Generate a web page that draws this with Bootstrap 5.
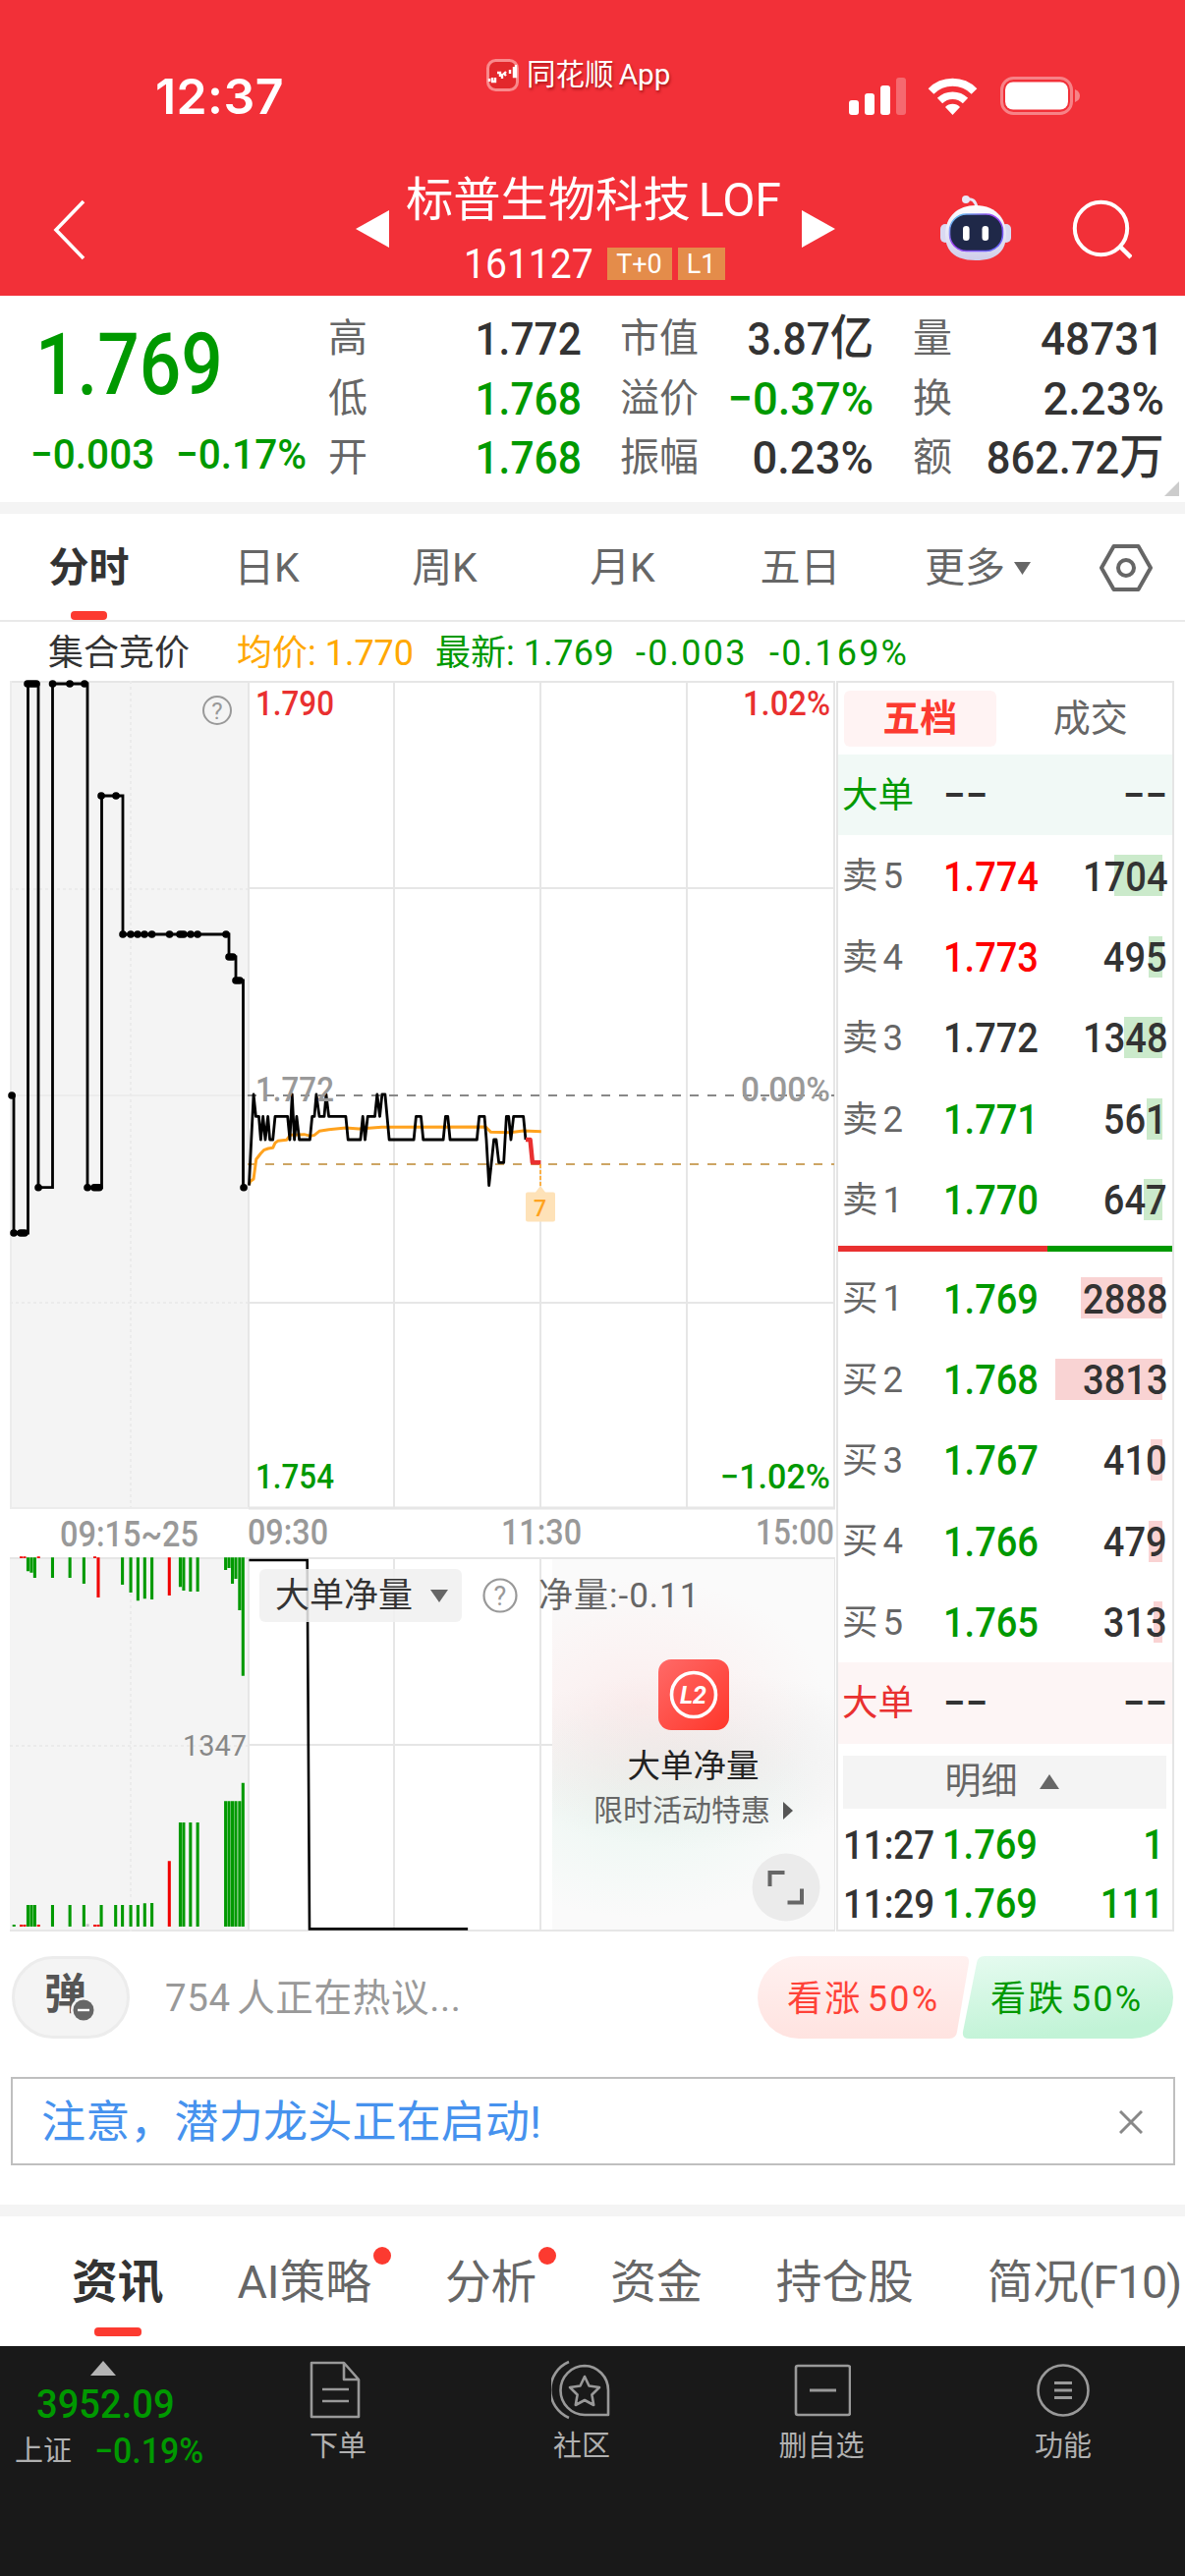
<!DOCTYPE html>
<html lang="zh-CN">
<head>
<meta charset="utf-8">
<meta name="viewport" content="width=device-width, initial-scale=1">
<title>标普生物科技LOF 161127</title>
<link href="https://cdn.jsdelivr.net/npm/bootstrap@5.3.0/dist/css/bootstrap.min.css" rel="stylesheet">
<style>
:root{--up:#e93030;--down:#009900;--ink:#333;--sub:#666;--mute:#999;--accent:#fc3a30;--band:#f4f4f4}
body{width:1206px;height:2622px;overflow:hidden;background:#fff;color:var(--ink);font-family:Roboto,"Noto Sans CJK SC",sans-serif;line-height:1}
.up{color:var(--up)}.down{color:var(--down)}.sub{color:var(--sub)}.mute{color:var(--mute)}.ink{color:var(--ink)}
svg{display:block;flex:none}
/* narrow numerals */
.din{display:inline-block;font-weight:500;white-space:nowrap;transform:scaleX(.905);transform-origin:left center}
.din-r{transform-origin:right center}
.din-w{transform:scaleX(.965)}
/* header */
.app-head{height:301px;background:#f23038;color:#fff}
.status{height:157px;padding:0 106px 0 158px}
.clock{font:600 50px/1 Inter,sans-serif;width:337px;padding-top:38px;letter-spacing:.4px}
.brand{font-size:29.500px;padding-bottom:4px;text-shadow:1px 2px 3px rgba(110,0,0,.6);word-spacing:-2px}
.status-icons{padding-top:38px}
.titlebar{height:144px}
.side-l{width:362px;padding-left:53px}
.side-r{width:356px;padding-left:106px}
.fund-name{font-size:48.3px;height:66px;line-height:68px;width:420px;padding-right:4px;word-spacing:-4px}
.code{font-size:42px;font-weight:400;transform:scaleX(.93)}
.tagbox{background:#e48c4a;font-size:27px;height:33px;line-height:34px;text-align:center}
/* quote */
.quote{height:210px}
.price-col{width:334px;padding-left:36px}
.price{font-size:87px;transform:scaleX(.86);padding-top:13px;height:114px;line-height:114px}
.delta{font-size:42px;height:68px;line-height:68px;margin:14px 0 0 -5px}
.stats{font-size:40px;padding-top:14px}
.stat{height:60.5px;line-height:60.5px}
.stat .din{font-size:47px}
.cjk-n{font-size:49px}
.c1{width:258px}.c2{width:258px;margin-left:39px}.c3{width:256px;margin-left:40px}
.corner{right:6px;bottom:6px}
.band{height:12px;background:var(--band)}
/* chart tabs */
.ktabs{height:110px;border-bottom:2px solid #e9e9e9;font-size:41px;color:var(--sub);padding-top:3px}
.ktabs>div{width:181px}
.bar-on{background:var(--accent);border-radius:4px;height:9px}
.k-bar{left:72px;bottom:0;width:37px}
.info{height:60px;font-size:36px;padding-left:49px;padding-top:4px}
/* order book */
.book{width:344px;border:2px solid #e5e5e5;height:1273px;background:#fff}
.book-tabs{height:73px;padding:8px 6px;font-size:38px}
.book-tabs>div{width:155px;height:57px;line-height:57px;text-align:center}
.book-on{background:#fff3f3;color:var(--accent);font-weight:700;border-radius:6px}
.orow{height:82.4px;padding:2px 5px 0 4px;font-size:36.5px;position:relative}
.orow .lbl{width:102.500px;word-spacing:-4px}
.orow .din{font-size:42px}
.orow .qty{position:relative}
.depth{position:absolute;right:10px;top:20px;height:42px}
.d-sell{background:#cbeacb}.d-buy{background:#f9d3d3}
.big-s{background:#f1f9f6}.big-b{background:#fdf5f5}
.bs-bar{height:6px;margin:6px 0}
.detail{height:54px;margin:12px 6px 6px 5px;padding-right:6px;background:var(--band);font-size:37px}
.trow{height:60px;padding:3px 8px 0 5px;font-size:42px}
.trow .t{font-size:40.500px;width:101px}
/* chart overlays */
.ov{position:absolute}
.indicator{left:254px;top:904px;width:206px;height:54px;border-radius:6px;background:rgba(240,240,240,.85);font-size:35px;padding-left:16px}
.net{left:481px;top:904px;height:54px;font-size:35px}
.net span{letter-spacing:1px}
.promo{left:552px;top:894px;width:287px;height:377px;background:radial-gradient(ellipse 190px 130px at 90px 150px,rgba(255,215,215,.35),transparent),radial-gradient(ellipse 190px 110px at 90px 255px,rgba(205,240,225,.3),transparent),radial-gradient(ellipse 230px 90px at 150px 205px,rgba(225,225,225,.5),transparent),#fafafa}
.promo-t{font-size:33.5px;color:#222;margin-top:20px}
.promo-s{font-size:30px;color:var(--sub);margin-top:13px}
.full{left:755px;top:1193px}
/* talk */
.talk{height:147px;padding:24px 12px 0 12px}
.dan{width:120px;height:84px;border-radius:42px;background:var(--band);border:3px solid #ececec;font-size:43px;font-weight:700;color:#555}
.notice{height:90px;margin:0 10px 0 11px;border:2px solid #bfbfbf;padding:2px 31px 0 29px;font-size:45px;letter-spacing:.2px;color:#4692ee}
/* news tabs */
.ntabs{height:132px;font-size:46.700px;color:var(--sub);gap:75px;padding-left:73px;overflow:hidden}
.ntabs>div{line-height:134px}
.ntabs .tight{letter-spacing:-.3px}
.reddot{position:absolute;width:18px;height:18px;border-radius:50%;background:var(--accent);top:31px;right:-20px}
.n-bar{left:23px;bottom:10px;width:48px}
/* bottom bar */
.dock{height:234px;background:#191919;color:#b0b0b0}
.dock-item{width:246px;font-size:29px;padding-top:13px}
.dock-item span{margin-top:13px}
</style>
</head>
<body>
<header class="app-head">
  <div class="status d-flex align-items-center">
    <div class="clock">12:37</div>
    <div class="brand d-flex align-items-center gap-2">
      <svg width="33" height="33" viewBox="0 0 33 33"><rect x="1.5" y="1.5" width="30" height="30" rx="8" fill="#e3282c" stroke="#f98a8c" stroke-width="3"/><path d="M3 20v3M6 19v4h3v-4M11 14h3v4M16 15v5M20 13l-2 2 2 2M24 11v4M28 8v10h2V6" stroke="#fff" stroke-width="2.4" fill="none"/></svg>
      <span class="text-nowrap">同花顺 App</span>
    </div>
    <div class="status-icons d-flex align-items-center ms-auto">
      <svg width="58" height="38" viewBox="0 0 58 38" fill="#fff"><rect y="23" width="10" height="15" rx="3"/><rect x="16" y="16" width="10" height="22" rx="3"/><rect x="32" y="8" width="10" height="30" rx="3"/><rect x="48" y="0" width="10" height="38" rx="3" opacity=".28"/></svg>
      <svg style="margin-left:22px" width="51" height="38" viewBox="0 0 51 38" fill="none" stroke="#fff" stroke-width="8"><path d="M3.5 14a31 31 0 0 1 44 0"/><path d="M12.5 23.5a18.500 18.500 0 0 1 26 0" stroke-width="7.500"/><path d="M25.500 38l-7.500-8a10.500 10.500 0 0 1 15 0z" fill="#fff" stroke="none"/></svg>
      <svg style="margin-left:23px" width="82" height="39" viewBox="0 0 82 39"><rect x="1.500" y="1.500" width="71" height="36" rx="12" fill="none" stroke="#fff" stroke-opacity=".4" stroke-width="3"/><rect x="5" y="5.500" width="64" height="28" rx="8" fill="#fff"/><path d="M76 13q5 2 5 6.500t-5 6.500z" fill="#fff" opacity=".4"/></svg>
    </div>
  </div>
  <div class="titlebar d-flex">
    <div class="side-l d-flex align-items-center">
      <svg width="34" height="62" viewBox="0 0 34 62" style="margin-top:10px"><path d="M32 2L4 31l28 29" fill="none" stroke="#fff" stroke-width="3.600"/></svg>
    </div>
    <svg width="34" height="144"><path d="M0 76L34 57v38z" fill="#fff"/></svg>
    <div class="d-flex flex-column align-items-center" style="width:420px;padding-top:13px">
      <div class="fund-name text-center text-nowrap">标普生物科技 LOF</div>
      <div class="d-flex align-items-center" style="width:269px;height:66px">
        <div style="width:146px"><span class="din code">161127</span></div>
        <div class="tagbox" style="width:66px">T+0</div>
        <div class="tagbox" style="width:48px;margin-left:6px">L1</div>
      </div>
    </div>
    <svg width="34" height="144"><path d="M34 76L0 57v38z" fill="#fff"/></svg>
    <div class="side-r d-flex">
      <svg width="76" height="144" viewBox="956 157 76 144">
        <defs><linearGradient id="hd" x1="0" y1="0" x2="0" y2="1"><stop offset="0" stop-color="#fff"/><stop offset="1" stop-color="#cfcdea"/></linearGradient>
        <linearGradient id="rim" x1="0" y1="0" x2="1" y2="1"><stop offset="0" stop-color="#58dff0"/><stop offset=".45" stop-color="#a03cf0"/><stop offset="1" stop-color="#5a6cff"/></linearGradient></defs>
        <path d="M984 203q8-2 10 8" fill="none" stroke="#e9e8f7" stroke-width="3"/><circle cx="983" cy="203" r="4" fill="#e9e8f7"/>
        <rect x="957" y="228" width="10" height="19" rx="5" fill="#d9d9f2"/><rect x="1019" y="228" width="10" height="19" rx="5" fill="#d9d9f2"/>
        <path d="M993 209c18 0 31 11 31 30s-13 26-31 26-31-7-31-26 13-30 31-30z" fill="url(#hd)"/>
        <rect x="966.500" y="218" width="54" height="37.500" rx="17" fill="#1f2848" stroke="url(#rim)" stroke-width="1.600"/>
        <rect x="980" y="230" width="6.600" height="15" rx="3.300" fill="#fff"/><rect x="999.500" y="230" width="6.600" height="15" rx="3.300" fill="#fff"/>
      </svg>
      <svg width="120" height="144" viewBox="1032 157 120 144" fill="none" stroke="#fff" stroke-width="4"><circle cx="1120.500" cy="232.500" r="26.700"/><path d="M1139 250l12 12" stroke-width="4.500"/></svg>
    </div>
  </div>
</header>

<section class="quote d-flex position-relative">
  <div class="price-col">
    <div><span class="din price down">1.769</span></div>
    <div class="delta down text-nowrap d-flex"><span class="din din-w" style="width:148px">−0.003</span><span class="din din-w">−0.17%</span></div>
  </div>
  <div class="stats d-flex">
    <div class="c1">
      <div class="stat d-flex justify-content-between"><span class="sub">高</span><span class="din din-r">1.772</span></div>
      <div class="stat d-flex justify-content-between"><span class="sub">低</span><span class="din din-r down">1.768</span></div>
      <div class="stat d-flex justify-content-between"><span class="sub">开</span><span class="din din-r down">1.768</span></div>
    </div>
    <div class="c2">
      <div class="stat d-flex justify-content-between"><span class="sub text-nowrap">市值</span><span class="din din-r">3.87<span class="cjk-n">亿</span></span></div>
      <div class="stat d-flex justify-content-between"><span class="sub text-nowrap">溢价</span><span class="din din-r din-w down">−0.37%</span></div>
      <div class="stat d-flex justify-content-between"><span class="sub text-nowrap">振幅</span><span class="din din-r din-w">0.23%</span></div>
    </div>
    <div class="c3">
      <div class="stat d-flex justify-content-between"><span class="sub">量</span><span class="din din-r" style="transform:scaleX(.94)">48731</span></div>
      <div class="stat d-flex justify-content-between"><span class="sub">换</span><span class="din din-r din-w">2.23%</span></div>
      <div class="stat d-flex justify-content-between"><span class="sub">额</span><span class="din din-r" style="transform:scaleX(.925)">862.72<span class="cjk-n">万</span></span></div>
    </div>
  </div>
  <svg class="corner position-absolute" width="15" height="15"><path d="M15 0v15H0z" fill="#ccc"/></svg>
</section>
<div class="band"></div>

<nav class="ktabs d-flex align-items-center text-center position-relative">
  <div class="fw-bold ink">分时</div><div>日K</div><div>周K</div><div>月K</div><div>五日</div>
  <div class="d-flex align-items-center justify-content-center gap-2">更多<svg width="19" height="13"><path d="M1 0h17l-8.500 13z" fill="#666"/></svg></div>
  <svg class="mx-auto" width="54" height="50" viewBox="0 1 54 50" fill="none" stroke="#666" stroke-width="4"><path d="M14.500 3h25L52 25 39.500 47h-25L2 25z" stroke-linejoin="round"/><circle cx="27" cy="25" r="8"/></svg>
  <span class="bar-on k-bar position-absolute"></span>
</nav>

<div class="info d-flex align-items-center text-nowrap">
  <span style="width:192px">集合竞价</span>
  <span style="color:#ffa800;width:202px">均价: <span>1.770</span></span>
  <span class="down" style="width:204px">最新: <span style="letter-spacing:.4px">1.769</span></span>
  <span class="down" style="width:136px;letter-spacing:2.200px">-0.003</span>
  <span class="down" style="letter-spacing:2.200px">-0.169%</span>
</div>

<main class="d-flex" style="padding-left:10px;height:1274px">
  <div class="position-relative" style="width:841px">
    <svg width="841" height="1274" viewBox="10 693 841 1274" overflow="visible" font-family="Roboto,'Noto Sans CJK SC',sans-serif">
      <rect x="10" y="693" width="242" height="842" fill="#f4f4f4"/><rect x="10" y="1585" width="242" height="381" fill="#f4f4f4"/>
      <g stroke="#e6e6e6" stroke-width="2" fill="none">
        <path d="M10 694H850M253 904H849M253 1326H849M253 693V1535M401 693V1535M550 693V1535M699 693V1535M849 693V1535"/>
        <path d="M253 1535H850" stroke-width="3"/><path d="M10 1535H253M11 693V1535M11 1115H252" stroke="#ececec"/>
        <path d="M10 1586H850M253 1776H849M10 1965H850M253 1585V1966M401 1585V1966M550 1585V1966M699 1585V1966M849 1585V1966"/>
        <path d="M133 693V1535M10 905H252M10 1326H252M133 1586V1966M10 1777H252" stroke="#ebebeb" stroke-dasharray="3 3"/>
      </g>
      <path d="M252 1115H849" stroke="#888" stroke-width="2" stroke-dasharray="9 9"/>
      <path d="M252 1185H849" stroke="#cda564" stroke-width="2" stroke-dasharray="9 9"/>
      <g fill="none" stroke-linejoin="round">
        <path d="M11 1115H14V1255H28.500V696H39V1208.700H53.500V696H89V1208.700H103.500V810H125V951H233V974H240V998H247.500V1208.700" stroke="#000" stroke-width="2.800" stroke-linejoin="miter"/>
        <path d="M12 1115h.1M14 1255h.1M21 1255h4M28 696h9M39 1208.700h.1M53.500 696h.1M71 696h.1M86 696h.1M89 1208.700h.1M96 1208.700h5M103 810h.1M118 810h.1M125 951h.1M133 951h.1M140 951h.1M147 951h.1M154.500 951h.1M172.500 951h.1M183 951h4M194 951h.1M201 951h.1M230 951h.1M233 974h4M240 998h4M248 1208.700h.1" stroke="#000" stroke-width="7.600" stroke-linecap="round"/>
        <g transform="translate(0 1100) scale(.3846 .33333)">
          <polyline vector-effect="non-scaling-stroke" stroke="#ffa21e" stroke-width="3" points="659,318 662,308 671,300 678,240 690,222 698,212 710,207 722,205 728,190 735,184 758,181 768,166 805,164 822,169 832,166 845,154 870,149 915,144 950,147 985,144 1010,142 1285,141 1299,157 1350,158 1385,153 1432,155"/>
          <polyline vector-effect="non-scaling-stroke" stroke="#000" stroke-width="2.800" points="659,320 671,42 677,109 685,109 690,180 696,109 702,180 709,109 714,180 722,180 728,109 761,109 767,180 773,42 779,180 785,109 792,180 820,180 826,109 832,109 837,42 845,109 858,109 863,42 870,109 915,109 921,180 954,180 960,109 966,180 973,109 992,109 998,42 1005,109 1011,42 1019,42 1030,180 1095,180 1101,109 1114,109 1120,180 1173,180 1179,109 1185,109 1191,180 1262,180 1268,109 1282,109 1287,180 1294,320 1307,180 1313,180 1320,250 1333,250 1340,109 1346,109 1352,180 1359,109 1385,109 1391,180"/>
          <polyline vector-effect="non-scaling-stroke" stroke="#e93030" stroke-width="4.500" points="1391,180 1403,180 1409,250 1431,250"/>
        </g>
        <path d="M550 1185V1207" stroke="#ffa21e" stroke-width="1.600" stroke-dasharray="4 2"/>
      </g>
      <path d="M537 1213.500h8l5-6.500 5 6.500h8q2 0 2 2v26q0 2-2 2h-26q-2 0-2-2v-26q0-2 2-2z" fill="#fee2b8"/>
      <text x="549.500" y="1237.500" font-size="23" font-weight="500" fill="#ffa21e" text-anchor="middle">7</text>
      <g font-size="35" font-weight="500">
        <g fill="#e93030"><text x="260" y="728" textLength="80" lengthAdjust="spacingAndGlyphs">1.790</text><text x="756" y="728" textLength="89" lengthAdjust="spacingAndGlyphs">1.02%</text></g>
        <g fill="#999"><text x="260" y="1121" textLength="80" lengthAdjust="spacingAndGlyphs">1.772</text><text x="754" y="1121" textLength="91" lengthAdjust="spacingAndGlyphs">0.00%</text></g>
        <g fill="#009900"><text x="260" y="1514.500" textLength="80" lengthAdjust="spacingAndGlyphs">1.754</text><text x="733" y="1514.500" textLength="112" lengthAdjust="spacingAndGlyphs">−1.02%</text></g>
      </g>
      <g font-size="36" font-weight="500" fill="#999"><text x="252" y="1571.500" textLength="82" lengthAdjust="spacingAndGlyphs">09:30</text><text x="510" y="1571.500" textLength="82" lengthAdjust="spacingAndGlyphs">11:30</text><text x="769" y="1571.500" textLength="80" lengthAdjust="spacingAndGlyphs">15:00</text><text x="61" y="1574" textLength="141" lengthAdjust="spacingAndGlyphs">09:15~25</text></g>
      <circle cx="221" cy="723" r="14" fill="none" stroke="#999" stroke-width="2"/><text x="221" y="732" font-size="24" fill="#999" text-anchor="middle">?</text>
      <g transform="translate(0 1540) scale(.3846 .33333)" fill="none" stroke-width="8">
        <path stroke="#009900" d="M74 136V178M83 136V182M92 136V198M139 136V198M185 136V198M222 136V216M324 136V219M346 136V243M365 136V268M383 136V262M402 136V264M477 136V226M486 136V237M504 136V240M523 136V240M597 136V174M606 136V168M615 136V216M624 136V201M634 136V297M643 136V497"/>
        <path stroke="#009900" d="M74 1263V1197M83 1263V1197M92 1263V1197M139 1263V1197M185 1263V1197M222 1263V1197M268 1263V1197M306 1263V1197M324 1263V1197M346 1263V1197M365 1263V1197M383 1263V1192M402 1263V1191M477 1263V945M486 1263V945M504 1263V945M523 1263V945M597 1263V880M606 1263V880M615 1263V880M624 1263V880M634 1263V880M643 1263V824M37 1263V1257"/>
        <path stroke="#f00000" d="M260 136V258M448 136V252M448 1263V1063M56 1263V1257M65 1263V1257M102 1263V1257M251 1263V1257M260 1263V1257M56 133V138M65 133V138M102 133V138M251 133V138"/>
        <path stroke="#c4c4c4" d="M232 1263V1255"/>
        <path d="M659 144H813L819 1270H1238" stroke="#000" stroke-width="2.600" vector-effect="non-scaling-stroke"/>
      </g>
      <text x="186" y="1787" font-size="29" fill="#888" textLength="65" lengthAdjust="spacingAndGlyphs">1347</text>
    </svg>
    <div class="promo ov d-flex flex-column align-items-center" style="padding-top:102px">
      <svg width="72" height="72" viewBox="0 0 72 72"><defs><linearGradient id="lg" x1="0" y1="0" x2="1" y2="1"><stop stop-color="#ff6a68"/><stop offset="1" stop-color="#ff362a"/></linearGradient></defs><rect width="72" height="72" rx="13" fill="url(#lg)"/><circle cx="36" cy="36" r="22.500" fill="none" stroke="#fff" stroke-width="3.600"/><text x="35.500" y="45" text-anchor="middle" font-family="Roboto" font-weight="700" font-style="italic" font-size="25" fill="#fff">L2</text></svg>
      <div class="promo-t text-nowrap">大单净量</div>
      <div class="promo-s d-flex align-items-center text-nowrap">限时活动特惠<svg style="margin-left:13px" width="10" height="18"><path d="M0 0l10 9-10 9z" fill="#555"/></svg></div>
    </div>
    <div class="indicator ov d-flex align-items-center text-nowrap">大单净量<svg style="margin-left:18px" width="18" height="13"><path d="M0 0h18L9 13z" fill="#666"/></svg></div>
    <div class="net ov d-flex align-items-center sub text-nowrap"><svg width="36" height="36" viewBox="0 0 36 36"><circle cx="18" cy="18" r="16.500" fill="none" stroke="#999" stroke-width="2.200"/><text x="18" y="28" font-family="Roboto" font-size="27" fill="#999" text-anchor="middle">?</text></svg><span style="margin-left:21px">净量:-0.11</span></div>
    <svg class="full ov" width="70" height="70" viewBox="0 0 70 70"><circle cx="35" cy="35" r="34.500" fill="#ebebeb"/><path d="M18.500 34V20H33.500M36.500 50.500H51V36.500" fill="none" stroke="#666" stroke-width="4"/></svg>
  </div>
  <div class="book">
    <div class="book-tabs d-flex"><div class="book-on">五档</div><div class="sub" style="margin-left:19px">成交</div></div>
    <div class="orow big-s d-flex align-items-center"><span class="lbl down">大单</span><span class="din din-w">−−</span><span class="din din-r din-w ms-auto">−−</span></div>
    <div class="orow d-flex align-items-center"><i class="depth d-sell" style="width:49px"></i><span class="lbl sub">卖 5</span><span class="din" style="color:#f00">1.774</span><span class="din din-r qty ms-auto">1704</span></div>
    <div class="orow d-flex align-items-center"><i class="depth d-sell" style="width:14px"></i><span class="lbl sub">卖 4</span><span class="din" style="color:#f00">1.773</span><span class="din din-r qty ms-auto">495</span></div>
    <div class="orow d-flex align-items-center"><i class="depth d-sell" style="width:39px"></i><span class="lbl sub">卖 3</span><span class="din">1.772</span><span class="din din-r qty ms-auto">1348</span></div>
    <div class="orow d-flex align-items-center"><i class="depth d-sell" style="width:16px"></i><span class="lbl sub">卖 2</span><span class="din down">1.771</span><span class="din din-r qty ms-auto">561</span></div>
    <div class="orow d-flex align-items-center"><i class="depth d-sell" style="width:19px"></i><span class="lbl sub">卖 1</span><span class="din down">1.770</span><span class="din din-r qty ms-auto">647</span></div>
    <div class="bs-bar d-flex"><div style="width:62.500%;background:#e93030"></div><div class="flex-fill" style="background:#009900"></div></div>
    <div class="orow d-flex align-items-center"><i class="depth d-buy" style="width:83px"></i><span class="lbl sub">买 1</span><span class="din down">1.769</span><span class="din din-r qty ms-auto">2888</span></div>
    <div class="orow d-flex align-items-center"><i class="depth d-buy" style="width:109px"></i><span class="lbl sub">买 2</span><span class="din down">1.768</span><span class="din din-r qty ms-auto">3813</span></div>
    <div class="orow d-flex align-items-center"><i class="depth d-buy" style="width:12px"></i><span class="lbl sub">买 3</span><span class="din down">1.767</span><span class="din din-r qty ms-auto">410</span></div>
    <div class="orow d-flex align-items-center"><i class="depth d-buy" style="width:14px"></i><span class="lbl sub">买 4</span><span class="din down">1.766</span><span class="din din-r qty ms-auto">479</span></div>
    <div class="orow d-flex align-items-center"><i class="depth d-buy" style="width:9px"></i><span class="lbl sub">买 5</span><span class="din down">1.765</span><span class="din din-r qty ms-auto">313</span></div>
    <div class="orow big-b d-flex align-items-center"><span class="lbl up">大单</span><span class="din din-w">−−</span><span class="din din-r din-w ms-auto">−−</span></div>
    <div class="detail sub d-flex align-items-center justify-content-center">明细<svg style="margin-left:22px" width="20" height="15"><path d="M0 15h20L10 0z" fill="#666"/></svg></div>
    <div class="trow d-flex align-items-center"><span class="t"><span class="din">11:27</span></span><span class="din down">1.769</span><span class="din din-r down ms-auto">1</span></div>
    <div class="trow d-flex align-items-center"><span class="t"><span class="din">11:29</span></span><span class="din down">1.769</span><span class="din din-r down ms-auto">111</span></div>
  </div>
</main>

<section class="talk d-flex">
  <div class="dan d-flex align-items-center position-relative" style="padding-left:30px;padding-bottom:6px">弹<svg class="position-absolute" style="left:57px;top:39px" width="26" height="26"><circle cx="13" cy="13" r="13" fill="#f4f4f4"/><circle cx="13" cy="13" r="10.500" fill="#666"/><path d="M7 13h12" stroke="#fff" stroke-width="2.400"/></svg></div>
  <div class="mute text-nowrap" style="font-size:38.500px;line-height:86px;letter-spacing:.7px;word-spacing:-4px;margin-left:36px;width:602px">754 人正在热议...</div>
  <svg width="425" height="84" viewBox="769 0 425 84" font-family="Roboto,'Noto Sans CJK SC',sans-serif" font-size="36">
    <defs><linearGradient id="rg" x1="0" y1="0" x2="0" y2="1"><stop stop-color="#fff1f0"/><stop offset="1" stop-color="#ffe3e0"/></linearGradient><linearGradient id="gg" x1="0" y1="0" x2=".3" y2="1"><stop stop-color="#e6fbf0"/><stop offset="1" stop-color="#c1f3d6"/></linearGradient></defs>
    <path d="M813 0H980q7 0 6 7L974 77q-1 7-8 7H813a42 42 0 0 1 0-84z" fill="url(#rg)"/>
    <path d="M1002 0H1152a42 42 0 0 1 0 84H986q-7 0-6-7L994 7q1-7 8-7z" fill="url(#gg)"/>
    <g word-spacing="-6"><text x="801" y="55.500" fill="#ff4238" textLength="153">看涨 50%</text><text x="1008" y="55.500" fill="#009900" textLength="153">看跌 50%</text></g>
  </svg>
</section>
<div class="notice d-flex align-items-center justify-content-between"><span class="text-nowrap">注意，潜力龙头正在启动!</span><svg width="24" height="24"><path d="M1 1l22 22M23 1L1 23" stroke="#888" stroke-width="3"/></svg></div>
<div class="band" style="margin-top:40px"></div>
<nav class="ntabs d-flex text-nowrap">
  <div class="position-relative fw-bold ink">资讯<i class="bar-on n-bar position-absolute"></i></div>
  <div class="position-relative">AI策略<i class="reddot"></i></div>
  <div class="position-relative">分析<i class="reddot"></i></div>
  <div>资金</div><div>持仓股</div><div class="tight">简况<span style="letter-spacing:-1.200px">(F10)</span></div>
</nav>
<footer class="dock d-flex">
  <div style="width:221px;padding-top:15px">
    <svg width="26" height="15" style="margin-left:92px"><path d="M0 15h26L13 0z" fill="#b4b4b4"/></svg>
    <div style="height:58px;line-height:58px;font-size:41px;padding-left:37px"><span class="din down" style="transform:scaleX(.93)">3952.09</span></div>
    <div class="d-flex align-items-center text-nowrap" style="height:38px;font-size:29px;padding-left:15px"><span style="width:81px">上证</span><span class="din down" style="font-size:36px;transform:scaleX(.94)">−0.19%</span></div>
  </div>
  <div class="dock-item d-flex flex-column align-items-center"><svg width="60" height="62" viewBox="2 0 60 62" fill="none" stroke="#999" stroke-width="2.600"><path d="M5 4h33l15 17v38H5zM38 4v17h15M16 31h27M16 43h27" stroke-linejoin="round"/></svg><span>下单</span></div>
  <div class="dock-item d-flex flex-column align-items-center" style="padding-left:4px"><svg width="62" height="62" viewBox="2 0 62 62" fill="none" stroke="#999" stroke-width="2.600"><path d="M20 3A31 31 0 0 0 20 60M36 7a24.500 25 0 1 0 0 50H60V32A24.500 25 0 0 0 36 7z" stroke-linejoin="round"/><path d="M36 18l4.500 9.500 10.500 1.500-7.600 7.500 1.800 10.500L36 42l-9.200 5 1.800-10.500L21 29l10.500-1.500z" stroke-linejoin="round"/></svg><span>社区</span></div>
  <div class="dock-item d-flex flex-column align-items-center"><svg width="60" height="62" viewBox="-4 0 60 62" fill="none" stroke="#999" stroke-width="2.600"><rect x="0" y="7" width="55" height="50" rx="2"/><path d="M14 32h27" stroke-width="3"/></svg><span class="text-nowrap">删自选</span></div>
  <div class="dock-item d-flex flex-column align-items-center"><svg width="60" height="62" viewBox="0 0 60 62" fill="none" stroke="#999" stroke-width="2.600"><circle cx="30" cy="32" r="25.500"/><path d="M21 24.500h18M21 32h18M21 39.500h18" stroke-width="3"/></svg><span>功能</span></div>
</footer>
<script src="https://cdn.jsdelivr.net/npm/bootstrap@5.3.0/dist/js/bootstrap.bundle.min.js"></script>
</body>
</html>
